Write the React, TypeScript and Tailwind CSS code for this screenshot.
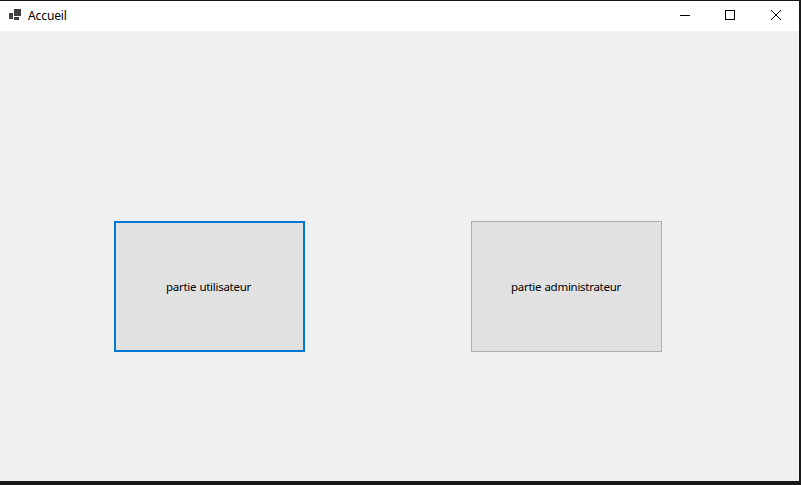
import type { ReactNode } from "react";

function AppIcon() {
  return (
    <svg width="12" height="11" viewBox="0 0 12 11" shapeRendering="crispEdges" fill="#424242">
      <rect x="0" y="4" width="4" height="6" />
      <rect x="5" y="0" width="7" height="7" />
      <rect x="5" y="8" width="5" height="3" />
    </svg>
  );
}

function CaptionButton({ label, children }: { label: string; children: ReactNode }) {
  return (
    <button aria-label={label} className="flex h-full w-[46px] items-start justify-center pt-[9px]">
      <svg width="10" height="10" viewBox="0 0 10 10" fill="none" stroke="#000" className="overflow-visible">
        {children}
      </svg>
    </button>
  );
}

function TitleBar() {
  return (
    <header className="flex h-[30px] shrink-0 bg-white">
      <div className="pt-2 pl-[9px]">
        <AppIcon />
      </div>
      <h1 className="ml-[7px] flex-1 pt-[7px] text-xs leading-4 tracking-[-0.1px]">Accueil</h1>
      <CaptionButton label="Réduire">
        <path d="M1 5.5H11" shapeRendering="crispEdges" />
      </CaptionButton>
      <CaptionButton label="Agrandir">
        <rect x="0.5" y="0.5" width="9" height="9" shapeRendering="crispEdges" />
      </CaptionButton>
      <CaptionButton label="Fermer">
        <path d="M0 0L10 10M10 0L0 10" />
      </CaptionButton>
    </header>
  );
}

export default function App() {
  return (
    <div className="h-[485px] w-[801px] overflow-hidden bg-[#1a1819] pt-px pr-[2px] pb-1 font-['Noto_Sans','Open_Sans',sans-serif] text-black">
      <div className="flex h-full flex-col bg-[#f0f0f0]">
        <TitleBar />
        <main className="flex gap-[166px] pt-[190px] pl-[114px]">
          <button className="h-[131px] w-[191px] border-2 border-[#0078d7] bg-[#e1e1e1] pt-px pr-[2px] text-[11.5px] leading-4 tracking-[-0.28px] [word-spacing:0.5px]">
            partie utilisateur
          </button>
          <button className="h-[131px] w-[191px] border border-[#adadad] bg-[#e1e1e1] pt-px pr-px text-[11.5px] leading-4 tracking-[-0.28px] [word-spacing:0.5px]">
            partie administrateur
          </button>
        </main>
      </div>
    </div>
  );
}
